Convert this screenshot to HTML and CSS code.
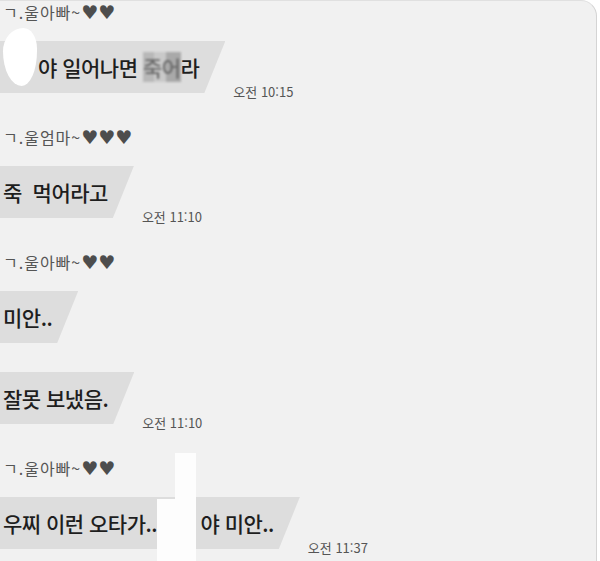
FILE: index.html
```html
<!DOCTYPE html>
<html lang="ko">
<head>
    <meta charset="utf-8" />
    <title>채팅</title>
    <link rel="stylesheet" href="styles.css">
</head>
<body>
<div class="screen">

    <div class="group">
        <div class="name">ㄱ.울아빠~<span class="hearts">♥♥</span></div>
        <div class="msg">
            <div class="bubble censored">야 일어나면 <span class="mosaic">죽어</span>라</div>
            <span class="time">오전 10:15</span>
        </div>
    </div>

    <div class="group">
        <div class="name">ㄱ.울엄마~<span class="hearts">♥♥♥</span></div>
        <div class="msg">
            <div class="bubble">죽&nbsp; 먹어라고</div>
            <span class="time">오전 11:10</span>
        </div>
    </div>

    <div class="group">
        <div class="name">ㄱ.울아빠~<span class="hearts">♥♥</span></div>
        <div class="msg">
            <div class="bubble">미안..</div>
        </div>
        <div class="msg">
            <div class="bubble">잘못 보냈음.</div>
            <span class="time">오전 11:10</span>
        </div>
    </div>

    <div class="group">
        <div class="name">ㄱ.울아빠~<span class="hearts">♥♥</span></div>
        <div class="msg">
            <div class="bubble">우찌 이런 오타가.. <span class="gap"></span>야 미안..</div>
            <span class="time">오전 11:37</span>
        </div>
    </div>

    <!-- white-out marks over names -->
    <div class="blob"></div>
    <div class="strip"></div>
</div>
</body>
</html>
```

FILE: styles.css
```css
body {
    margin: 0;
    background: #ffffff;
}

.screen {
    position: relative;
    width: 597px;
    height: 561px;
    box-sizing: border-box;
    padding-top: 1px;
    background: #f1f1f1;
    border-top: 1px solid #e0e0e0;
    border-right: 1px solid #d4d4d4;
    border-top-right-radius: 16px;
    overflow: hidden;
    display: flex;
    flex-direction: column;
    gap: 34px;
    font-family: "Noto Sans CJK KR", sans-serif;
}

.name {
    padding-left: 3px;
    margin-bottom: 19px;
    font-size: 16px;
    line-height: 20px;
    letter-spacing: 1px;
    color: #555555;
}

.hearts {
    font-family: "DejaVu Sans", sans-serif;
    font-size: 19px;
    letter-spacing: 0;
    color: #4d4d4d;
}

.msg {
    display: flex;
    align-items: flex-end;
}

.msg + .msg {
    margin-top: 29px;
}

.bubble {
    padding: 12px 26px 12px 3px;
    background: #dddddd;
    font-size: 21px;
    font-weight: 500;
    line-height: 28px;
    letter-spacing: -0.5px;
    color: #1e1e1e;
    clip-path: polygon(0 0, 100% 0, calc(100% - 21px) 100%, 0 100%);
}

.censored {
    padding-left: 38px;
}

.mosaic {
    color: #6a6a6a;
    background: linear-gradient(90deg, #b8b8b8 0 30%, #c9c9c9 30% 60%, #a9a9a9 60% 100%);
    filter: blur(1.2px);
}

.gap {
    display: inline-block;
    width: 38px;
}

.time {
    margin-left: 8px;
    margin-bottom: -6px;
    font-size: 13px;
    line-height: 14px;
    color: #555555;
}

.blob {
    position: absolute;
    left: 3px;
    top: 27px;
    width: 34px;
    height: 58px;
    background: #ffffff;
    border-radius: 60% 40% 45% 55% / 40% 35% 60% 60%;
}

.strip {
    position: absolute;
    left: 157px;
    top: 452px;
    width: 39px;
    height: 110px;
    background: #fdfdfd;
    clip-path: polygon(18px 0, 100% 0, 100% 100%, 0 100%, 0 46px, 18px 46px);
}
```
